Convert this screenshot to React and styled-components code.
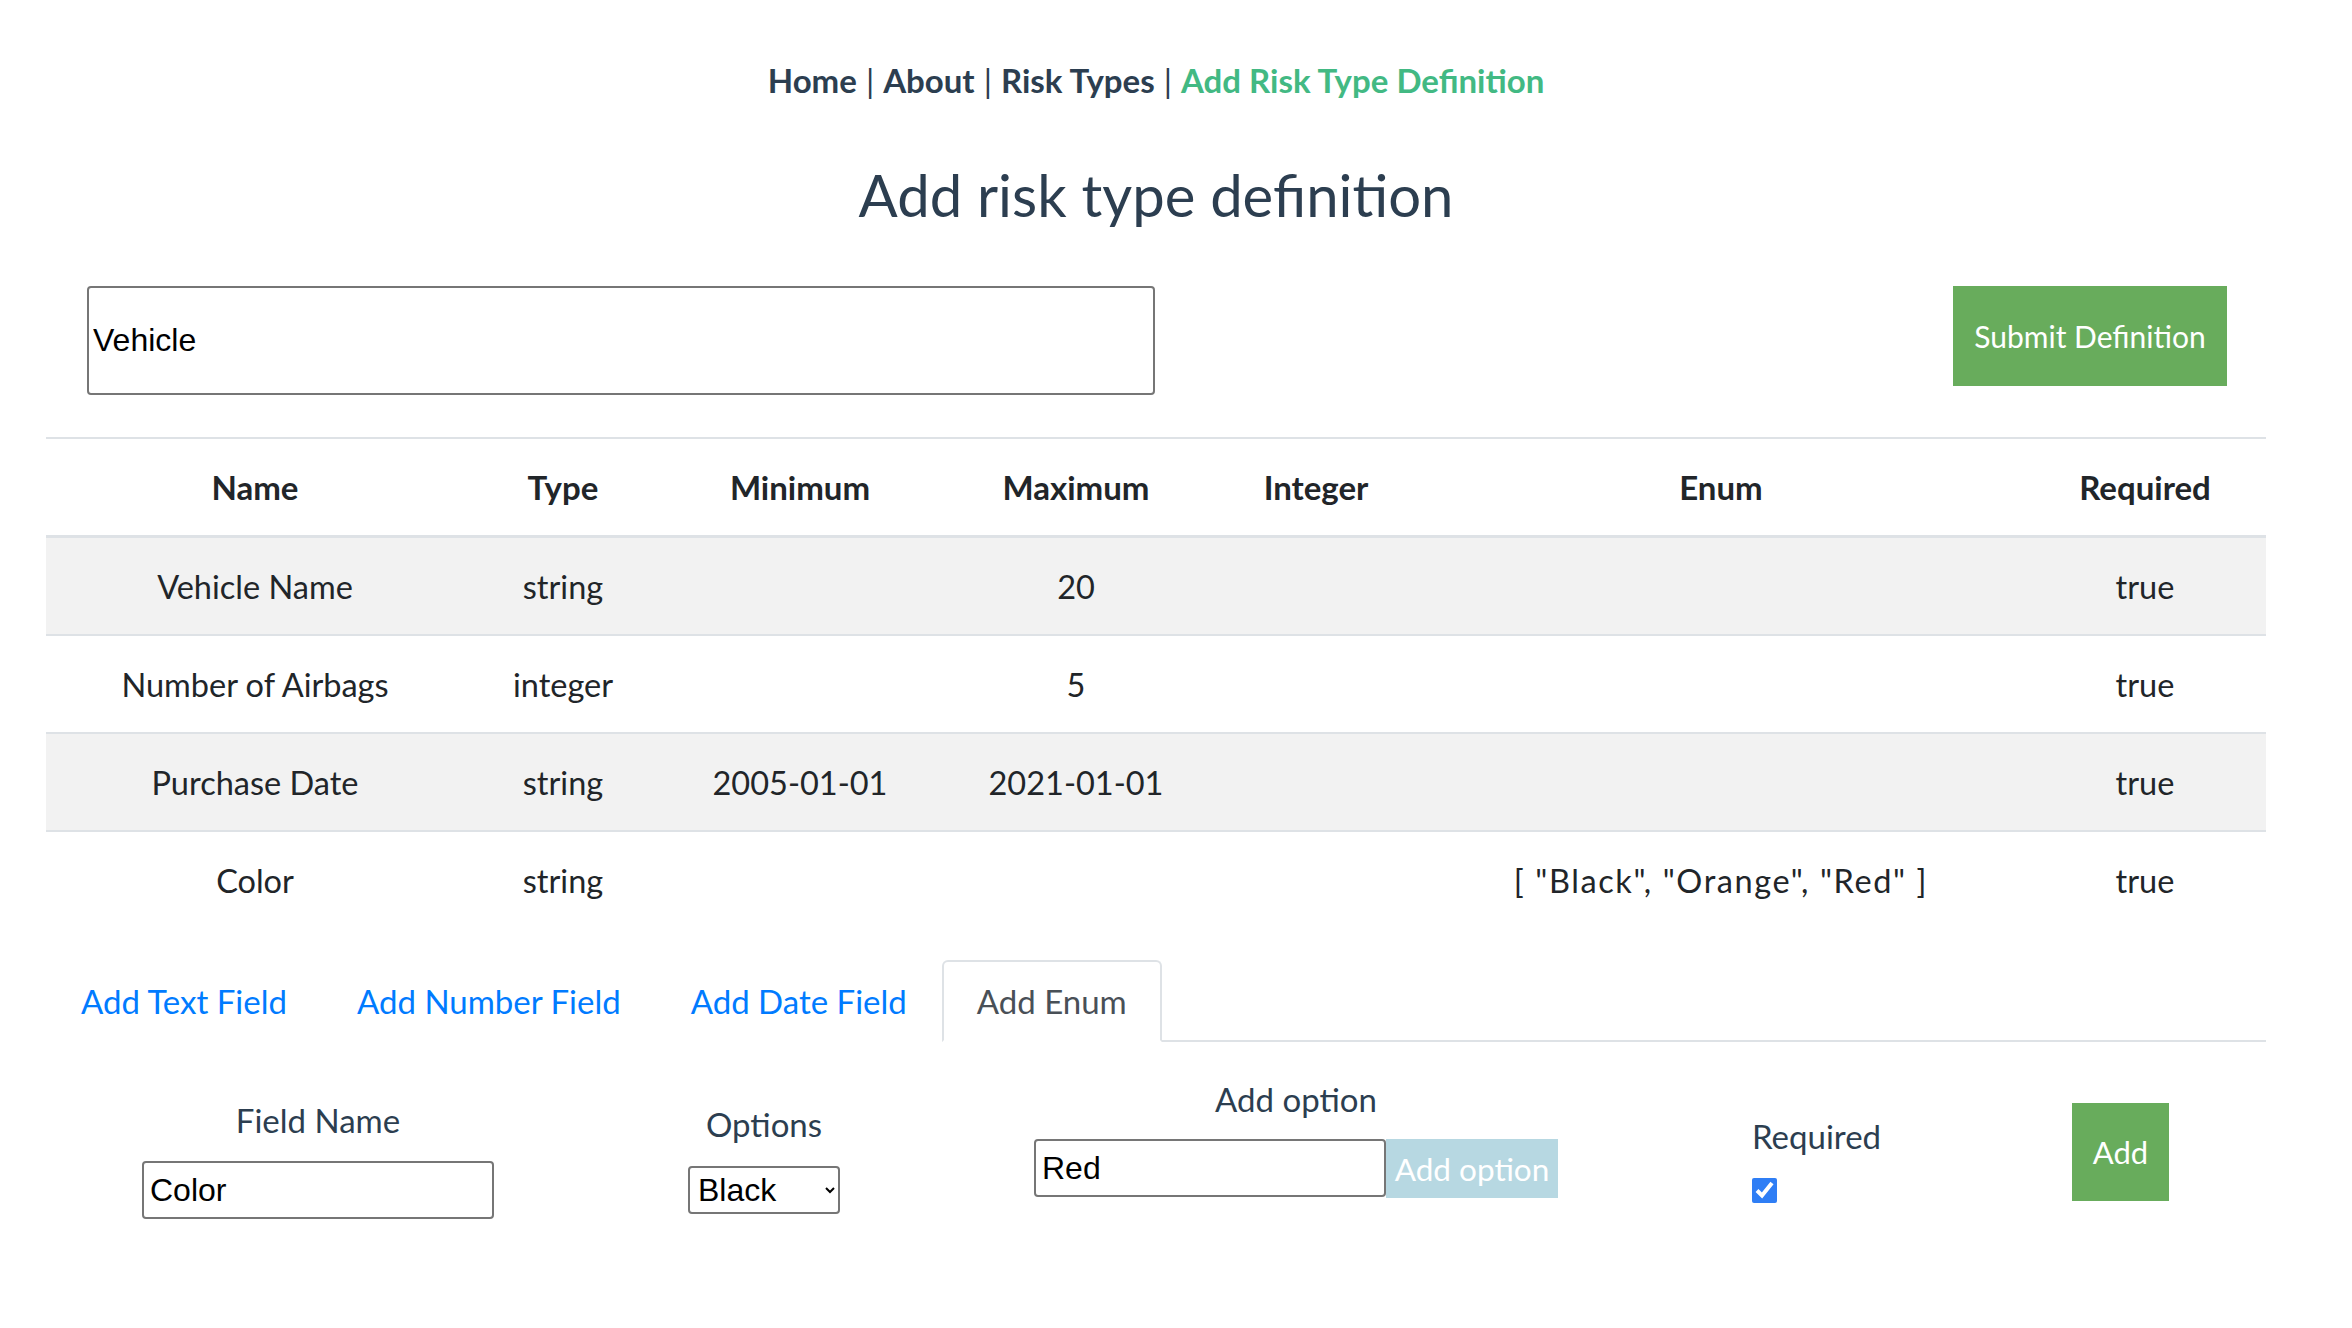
import React from 'react';
import styled, { createGlobalStyle } from 'styled-components';

const GlobalStyle = createGlobalStyle`
    body {
        margin: 0;
        background: #ffffff;
        font-family: Lato, "Open Sans", sans-serif;
        color: #2c3e50;
    }
`;

const Page = styled.div`
    width: 2312px;
    padding-bottom: 100px;
`;

const Nav = styled.nav`
    padding-top: 60px;
    height: 40px;
    line-height: 40px;
    text-align: center;
    font-size: 33px;
    color: #2c3e50;
`;

const NavLink = styled.a`
    font-weight: 700;
    color: ${(p) => (p.active ? '#42b983' : '#2c3e50')};
    text-decoration: none;
`;

const Separator = styled.span`
    margin: 0 9px;
    font-weight: 400;
`;

const Heading = styled.h1`
    margin: 59px 0 0;
    height: 72px;
    line-height: 72px;
    text-align: center;
    font-size: 58px;
    font-weight: 400;
    color: #2c3e50;
`;

const Container = styled.div`
    margin: 0 46px;
`;

const DefinitionBar = styled.div`
    display: flex;
    justify-content: space-between;
    align-items: flex-start;
    margin: 55px 0 0 41px;
    padding-right: 39px;
`;

const NameInput = styled.input`
    box-sizing: border-box;
    width: 1068px;
    height: 109px;
    border: 2px solid #767676;
    border-radius: 4px;
    padding: 0 4px;
    font-family: "Liberation Sans", Arial, sans-serif;
    font-size: 32px;
    color: #000;
`;

const Button = styled.button`
    border: none;
    border-radius: 0;
    background: ${(p) => p.bg || '#68ac5c'};
    color: #ffffff;
    font-family: Lato, sans-serif;
    font-size: ${(p) => p.size || 31}px;
    width: ${(p) => p.w}px;
    height: ${(p) => p.h}px;
    padding: 0;
    cursor: pointer;
`;

const Table = styled.table`
    margin-top: 42px;
    width: 2220px;
    border-collapse: collapse;
    table-layout: fixed;
    color: #212529;
    font-size: 32.5px;
`;

const Th = styled.th`
    height: 96px;
    font-weight: 700;
    font-size: 33px;
    text-align: center;
    border-top: 2px solid #dee2e6;
    border-bottom: 3px solid #dee2e6;
    padding: 0;
`;

const Tr = styled.tr`
    background: ${(p) => (p.striped ? '#f2f2f2' : '#ffffff')};
`;

const Td = styled.td`
    height: 96px;
    text-align: center;
    border-top: 2px solid #dee2e6;
    padding: 0;
    white-space: pre;
    letter-spacing: ${(p) => p.spacing || 0}px;
`;

const Tabs = styled.ul`
    display: flex;
    list-style: none;
    margin: 32px 0 0;
    padding: 0;
    border-bottom: 2px solid #dee2e6;
`;

const Tab = styled.li`
    box-sizing: border-box;
    height: 82px;
    margin-bottom: -2px;
    padding: 0 33px;
    display: flex;
    align-items: center;
    font-size: 33px;
    color: ${(p) => (p.active ? '#495057' : '#007bff')};
    background: #ffffff;
    border: 2px solid ${(p) => (p.active ? '#dee2e6' : 'transparent')};
    border-bottom-color: ${(p) => (p.active ? '#ffffff' : 'transparent')};
    border-radius: 6px 6px 0 0;
`;

const FormRow = styled.div`
    display: flex;
    align-items: flex-start;
`;

const FieldColumn = styled.div`
    box-sizing: border-box;
    width: ${(p) => p.w}px;
    padding-top: ${(p) => p.top}px;
    padding-left: ${(p) => p.left || 0}px;
    display: flex;
    flex-direction: column;
    align-items: ${(p) => p.align || 'center'};
`;

const Label = styled.div`
    height: 40px;
    line-height: 40px;
    font-size: 33px;
    color: #2c3e50;
    margin-bottom: ${(p) => p.gap || 21}px;
`;

const SmallInput = styled.input`
    box-sizing: border-box;
    width: 352px;
    height: ${(p) => p.h || 58}px;
    border: 2px solid #767676;
    border-radius: 4px;
    padding: 0 6px;
    font-family: "Liberation Sans", Arial, sans-serif;
    font-size: 32px;
    color: #000;
`;

const InlineGroup = styled.div`
    display: flex;
    align-items: flex-start;
`;

const Select = styled.select`
    box-sizing: border-box;
    width: 152px;
    height: 48px;
    border: 2px solid #767676;
    border-radius: 4px;
    padding: 0 4px;
    font-family: "Liberation Sans", Arial, sans-serif;
    font-size: 32px;
    color: #000;
    background: #ffffff;
`;

const Checkbox = styled.input`
    width: 25px;
    height: 25px;
    margin: 0;
    accent-color: #2f7ef5;
`;

const fields = [
    { name: 'Vehicle Name', type: 'string', min: '', max: '20', integer: '', enumValues: '', required: 'true' },
    { name: 'Number of Airbags', type: 'integer', min: '', max: '5', integer: '', enumValues: '', required: 'true' },
    { name: 'Purchase Date', type: 'string', min: '2005-01-01', max: '2021-01-01', integer: '', enumValues: '', required: 'true' },
    { name: 'Color', type: 'string', min: '', max: '', integer: '', enumValues: '[ "Black", "Orange", "Red" ]', required: 'true' },
];

const columns = [
    ['Name', 418],
    ['Type', 198],
    ['Minimum', 276],
    ['Maximum', 276],
    ['Integer', 204],
    ['Enum', 606],
    ['Required', 242],
];

const App = () => {
    return (
        <Page>
            <GlobalStyle />
            <Nav>
                <NavLink href="#">Home</NavLink>
                <Separator>|</Separator>
                <NavLink href="#">About</NavLink>
                <Separator>|</Separator>
                <NavLink href="#">Risk Types</NavLink>
                <Separator>|</Separator>
                <NavLink href="#" active>Add Risk Type Definition</NavLink>
            </Nav>
            <Heading>Add risk type definition</Heading>
            <Container>
                <DefinitionBar>
                    <NameInput defaultValue="Vehicle" />
                    <Button w={274} h={100} size={30}>Submit Definition</Button>
                </DefinitionBar>
                <Table>
                    <colgroup>
                        {columns.map(([label, width]) => (
                            <col key={label} style={{ width }} />
                        ))}
                    </colgroup>
                    <thead>
                        <tr>
                            {columns.map(([label]) => (
                                <Th key={label}>{label}</Th>
                            ))}
                        </tr>
                    </thead>
                    <tbody>
                        {fields.map((field, i) => (
                            <Tr key={field.name} striped={i % 2 === 0}>
                                <Td>{field.name}</Td>
                                <Td>{field.type}</Td>
                                <Td>{field.min}</Td>
                                <Td>{field.max}</Td>
                                <Td>{field.integer}</Td>
                                <Td spacing={1.6}>{field.enumValues}</Td>
                                <Td>{field.required}</Td>
                            </Tr>
                        ))}
                    </tbody>
                </Table>
                <Tabs>
                    <Tab>Add Text Field</Tab>
                    <Tab>Add Number Field</Tab>
                    <Tab>Add Date Field</Tab>
                    <Tab active>Add Enum</Tab>
                </Tabs>
                <FormRow>
                    <FieldColumn w={544} top={58}>
                        <Label>Field Name</Label>
                        <SmallInput defaultValue="Color" />
                    </FieldColumn>
                    <FieldColumn w={348} top={62}>
                        <Label gap={22}>Options</Label>
                        <Select defaultValue="Black">
                            <option>Black</option>
                            <option>Orange</option>
                            <option>Red</option>
                        </Select>
                    </FieldColumn>
                    <FieldColumn w={716} top={37}>
                        <Label gap={20}>Add option</Label>
                        <InlineGroup>
                            <SmallInput defaultValue="Red" h={58} />
                            <Button w={172} h={59} bg="#b7d8e2" size={31.5}>Add option</Button>
                        </InlineGroup>
                    </FieldColumn>
                    <FieldColumn w={418} top={74} left={98} align="flex-start">
                        <Label gap={22}>Required</Label>
                        <Checkbox type="checkbox" defaultChecked />
                    </FieldColumn>
                    <FieldColumn w={194} top={61} align="flex-start">
                        <Button w={97} h={98}>Add</Button>
                    </FieldColumn>
                </FormRow>
            </Container>
        </Page>
    );
};

export default App;
